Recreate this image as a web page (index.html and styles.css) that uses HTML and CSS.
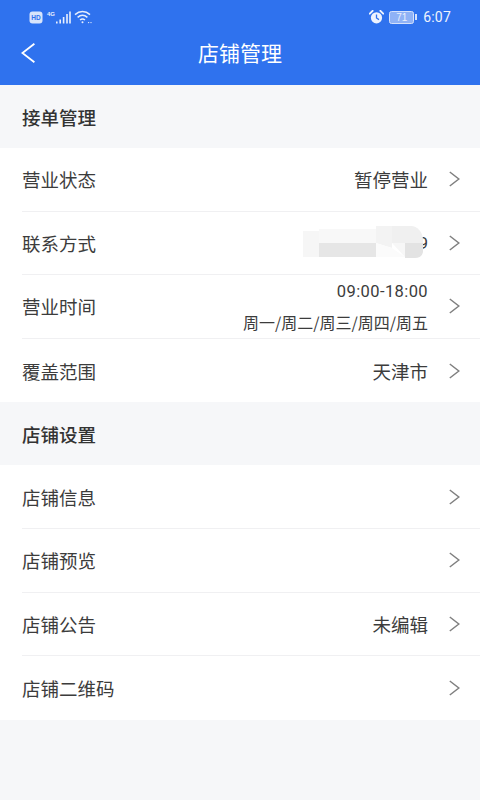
FILE: index.html
```html
<!DOCTYPE html>
<html lang="zh">
<head>
<meta charset="utf-8">
<title>店铺管理</title>
<link rel="stylesheet" href="styles.css">
</head>
<body>
<header class="header">
  <div class="status">
    <div class="status-group">
      <svg class="hd" width="14" height="13" viewBox="0 0 14 13"><rect x="0.5" y="0.5" width="13" height="12" rx="3" fill="#d8e4fb"/><text x="7" y="9.2" text-anchor="middle" class="hd-text">HD</text></svg>
      <span class="net">4G</span>
      <svg class="signal" width="15" height="13" viewBox="0 0 15 13"><g fill="#e8effd"><rect x="0" y="10.5" width="1.6" height="2"/><rect x="3.4" y="8.5" width="1.6" height="4"/><rect x="6.8" y="6" width="1.6" height="6.5"/><rect x="10.2" y="3" width="1.6" height="9.5"/><rect x="13.2" y="0.5" width="1.6" height="12"/></g></svg>
      <svg class="wifi" width="18" height="14" viewBox="0 0 18 14" fill="none" stroke="#e8effd" stroke-width="1.5"><path d="M1 4.6C5.5 0.6 11.5 0.6 16 4.6"/><path d="M3.6 7.4C6.6 4.8 10.4 4.8 13.4 7.4"/><path d="M6 10C7.6 8.8 9.4 8.8 11 10"/><circle cx="8.5" cy="12.2" r="1" fill="#e8effd" stroke="none"/><circle cx="14.6" cy="12.6" r="0.7" fill="#e8effd" stroke="none"/><circle cx="17" cy="12.6" r="0.7" fill="#e8effd" stroke="none"/></svg>
    </div>
    <div class="status-group">
      <svg class="alarm" width="15" height="14" viewBox="0 0 15 14"><circle cx="7.5" cy="7.8" r="5.6" fill="#eef3fe"/><path d="M0.8 3.6L3.6 0.9M14.2 3.6L11.4 0.9" stroke="#eef3fe" stroke-width="2" stroke-linecap="round"/><path d="M7.5 4.6V8L10 9.6" fill="none" stroke="#2f72ee" stroke-width="1.3"/></svg>
      <span class="battery"><span class="battery-body">71</span><span class="battery-cap"></span></span>
      <span class="time">6:07</span>
    </div>
  </div>
  <div class="nav">
    <svg class="back" width="14" height="20" viewBox="0 0 14 20" fill="none" stroke="#fff" stroke-width="1.8"><path d="M13.4 0.7L1.4 10L13.4 19.3"/></svg>
    <h1 class="title">店铺管理</h1>
  </div>
</header>

<section>
  <h2 class="section-title">接单管理</h2>
  <ul class="list">
    <li class="row"><span class="label">营业状态</span><span class="value">暂停营业</span><svg class="chevron" viewBox="0 0 12 16"><path d="M1.8 1L10.8 8L1.8 15"/></svg></li>
    <li class="row"><span class="label">联系方式</span><span class="value value-masked"><svg class="mask" width="120" height="33" viewBox="0 0 120 33"><path d="M0 5H16V31H0Z" fill="#f6f6f6"/><path d="M16 3H73V17H16Z" fill="#f8f8f8"/><path d="M16 17H73V31H16Z" fill="#e6e6e6"/><path d="M73 0H89V22L73 17Z" fill="#f3f3f3"/><path d="M89 0H108C114 0 120 6 120 14V17H89Z" fill="#f0f0f0"/><path d="M73 17L89 22L102 31H73Z" fill="#fbfbfb"/><path d="M89 17H102V31Z" fill="#f7f7f7"/><path d="M102 17H120V25C120 29 117 32 112 32H102Z" fill="#e3e3e3"/></svg>9</span><svg class="chevron" viewBox="0 0 12 16"><path d="M1.8 1L10.8 8L1.8 15"/></svg></li>
    <li class="row"><span class="label">营业时间</span><span class="value value-small"><span class="hours">09:00-18:00</span><span>周一/周二/周三/周四/周五</span></span><svg class="chevron" viewBox="0 0 12 16"><path d="M1.8 1L10.8 8L1.8 15"/></svg></li>
    <li class="row"><span class="label">覆盖范围</span><span class="value">天津市</span><svg class="chevron" viewBox="0 0 12 16"><path d="M1.8 1L10.8 8L1.8 15"/></svg></li>
  </ul>
</section>

<section>
  <h2 class="section-title">店铺设置</h2>
  <ul class="list">
    <li class="row"><span class="label">店铺信息</span><svg class="chevron" viewBox="0 0 12 16"><path d="M1.8 1L10.8 8L1.8 15"/></svg></li>
    <li class="row"><span class="label">店铺预览</span><svg class="chevron" viewBox="0 0 12 16"><path d="M1.8 1L10.8 8L1.8 15"/></svg></li>
    <li class="row"><span class="label">店铺公告</span><span class="value">未编辑</span><svg class="chevron" viewBox="0 0 12 16"><path d="M1.8 1L10.8 8L1.8 15"/></svg></li>
    <li class="row"><span class="label">店铺二维码</span><svg class="chevron" viewBox="0 0 12 16"><path d="M1.8 1L10.8 8L1.8 15"/></svg></li>
  </ul>
</section>
</body>
</html>
```

FILE: styles.css
```css
* { box-sizing: border-box; }
html, body { margin: 0; padding: 0; }
body {
  width: 480px;
  height: 800px;
  overflow: hidden;
  background: #f6f7f9;
  font-family: "Noto Sans CJK SC", "Noto Sans", sans-serif;
  color: #333;
}
.header { height: 85px; background: #2f72ee; color: #fff; }
.status {
  height: 34px;
  padding: 0 29px 0 29px;
  display: flex;
  justify-content: space-between;
  align-items: center;
}
.status-group { display: flex; align-items: center; }
.hd-text { font: 700 6.5px "Liberation Sans", sans-serif; fill: #2f72ee; }
.net { font: 700 6px/8px "Liberation Sans", sans-serif; color: #e8effd; margin: -7px 0 0 4px; }
.signal { margin-left: 1px; }
.wifi { margin-left: 3px; }
.alarm { margin-right: 5px; }
.battery { display: flex; align-items: center; margin-right: 6px; }
.battery-body {
  width: 25px;
  height: 13px;
  border: 1px solid #d5e1fb;
  border-radius: 2.5px;
  background: #8fb2f6;
  color: #e8effd;
  font: 10px/11px "Liberation Sans", sans-serif;
  text-align: center;
}
.battery-cap { width: 2px; height: 6px; margin-left: 1px; background: #d5e1fb; }
.time { font: 14px/16px "Roboto", sans-serif; color: #eef3fe; letter-spacing: 0.2px; }
.nav { position: relative; height: 51px; display: flex; align-items: center; justify-content: center; padding-bottom: 15px; }
.back { position: absolute; left: 21px; top: 9px; }
.title { margin: 0; font-size: 21px; font-weight: 400; line-height: 30px; }
.section-title {
  margin: 0;
  height: 63px;
  padding: 0 0 0 22px;
  display: flex;
  align-items: center;
  font-size: 18.5px;
  font-weight: 500;
  color: #333;
}
.list { margin: 0; padding: 0 0 0 22px; list-style: none; background: #fff; }
.row {
  height: 63.6px;
  padding-right: 20px;
  display: flex;
  align-items: center;
  border-bottom: 1px solid #f0f0f2;
}
.row:last-child { border-bottom: 0; }
.label { flex: 1; font-size: 18.5px; color: #3c3c3c; }
.value { font-size: 18.5px; color: #3c3c3c; }
.value-small {
  display: flex;
  flex-direction: column;
  align-items: flex-end;
  font-size: 16px;
  line-height: 30px;
  padding-top: 1px;
}
.hours { font-family: "Roboto", sans-serif; font-size: 16.5px; letter-spacing: 0.4px; }
.value-masked { position: relative; font-family: "Roboto", sans-serif; font-size: 17px; line-height: 24px; }
.mask { position: absolute; right: 5px; top: -5px; }
.chevron {
  width: 12px;
  height: 16px;
  margin-left: 20px;
  flex: none;
  fill: none;
  stroke: #808080;
  stroke-width: 1.5;
}
```
